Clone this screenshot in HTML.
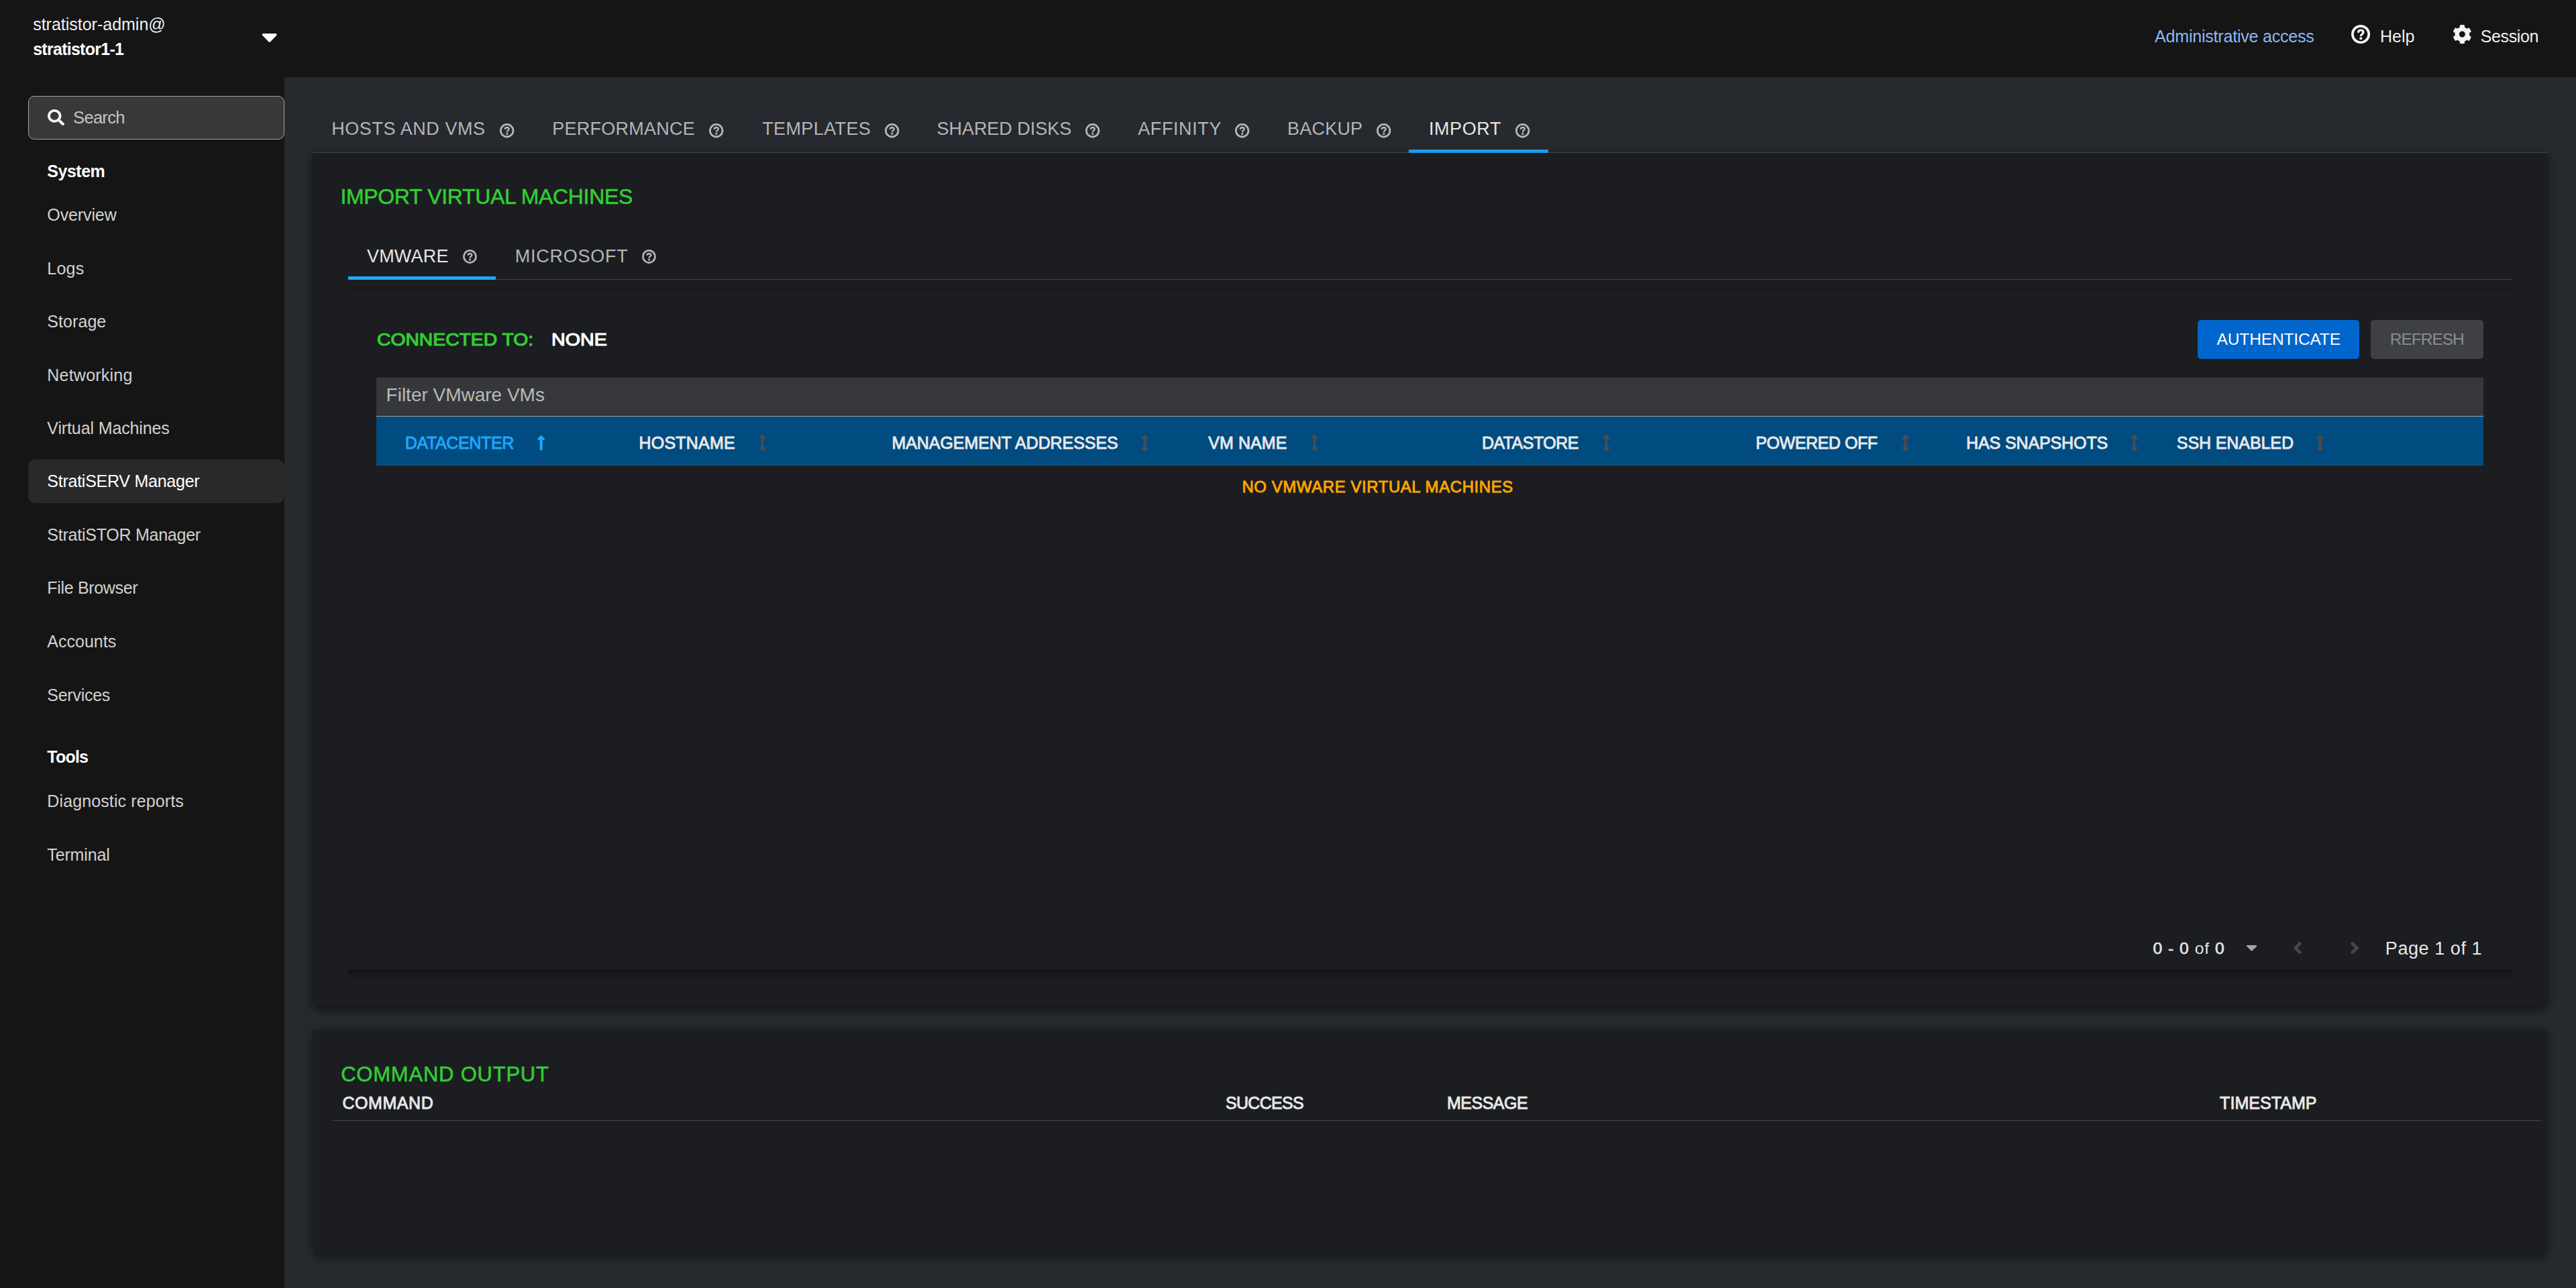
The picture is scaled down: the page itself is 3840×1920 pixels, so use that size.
<!DOCTYPE html>
<html lang="en">
<head>
<meta charset="utf-8">
<title>StratiSERV Manager - stratistor1-1</title>
<style>
html,body{margin:0;padding:0}
body{width:3840px;height:1920px;overflow:hidden;position:relative;background:#151515;
 font-family:"Liberation Sans",sans-serif;color:#fff;white-space:nowrap}
ul{list-style:none;margin:0;padding:0}
h1,h2,h3,p{margin:0;font-weight:400}
a{text-decoration:none}
b{font-weight:400;-webkit-text-stroke:.7px currentColor}
.t{position:absolute;display:block;white-space:nowrap}
.ic{position:absolute;display:block;overflow:visible}
.box{position:absolute;box-sizing:border-box}
#topbar{left:0;top:0;width:3840px;height:115px;background:#151515}
#sidebar{left:0;top:115px;width:424px;height:1805px;background:#151515}
#content{left:424px;top:115px;width:3416px;height:1805px;background:#26292d}
#searchbox{left:42px;top:143px;width:382px;height:65px;background:#383838;border:1px solid #a2a2a2;border-radius:9px}
#navsel{left:42px;top:685px;width:382px;height:64.5px;background:#292929;border-radius:10px}
.card{background:#1b1d21;border-radius:0 0 10px 10px}
#card1{box-shadow:0 5px 14px rgba(0,0,0,.55)}
#card2{box-shadow:0 1px 14px rgba(0,0,0,.4)}
#card1{left:466px;top:228px;width:3331px;height:1271.5px}
#card2{left:466px;top:1536px;width:3331px;height:337.5px}
#tabline{left:466px;top:227px;width:3331px;height:1px;background:#44474b}
#tabsel{left:2100px;top:223px;width:208px;height:5px;background:linear-gradient(#1fa7f8,#1e9ce9 50%,#1c90da)}
#panelshadow{left:519px;top:1445px;width:3225px;height:21px;background:linear-gradient(#111215,#15171a 30%,#191b1e 65%,#1b1d21)}
#subline{left:519px;top:416px;width:3225px;height:1px;background:#44474b}
#subshadow{left:519px;top:427px;width:3225px;height:7px;background:linear-gradient(#1b1d21,#1a1b1f 50%,#17181b)}
#subsel{left:519px;top:412px;width:220px;height:5px;background:#1fa7f8}
#btn-auth{left:3276px;top:477px;width:241px;height:58px;background:#0066cc;border-radius:5px}
#btn-refresh{left:3534px;top:477px;width:168px;height:58px;background:#3e4043;border-radius:5px}
#filter{left:561.2px;top:563.1px;width:3140.5px;height:57.6px;background:#36373a;border-bottom:1.3px solid #9a9c9e}
#thead{left:561.2px;top:620.7px;width:3140.5px;height:73.1px;background:#004b80;border-bottom:1.5px solid #46474b}
#cmdline{left:496px;top:1669.6px;width:3292px;height:1.5px;background:#46494d}
</style>
</head>
<body>
<header>
<div id="topbar" class="box"></div>
<div id="hostswitch">
<span class="t" style="left:49.2px;top:20.5px;font-size:25px;line-height:30px;color:#f0f0f0;letter-spacing:-0.01px;">stratistor-admin@</span>
<span class="t" style="left:49.2px;top:57.5px;font-size:25px;line-height:30px;color:#ffffff;font-weight:700;letter-spacing:-0.73px;">stratistor1-1</span>
<svg class="ic" style="left:391.3px;top:50.3px" width="21.6" height="13.1" viewBox="13 192 294 169" preserveAspectRatio="none"><path fill="#ffffff" d="M31.3 192h257.3c17.8 0 26.7 21.5 14.1 34.1L174.1 354.8c-7.8 7.8-20.5 7.8-28.3 0L17.2 226.1C4.6 213.5 13.5 192 31.3 192z"/></svg>
</div>
<div id="toolbar">
<a class="t" style="left:3212.1px;top:38.5px;font-size:25px;line-height:30px;color:#8bb9f4;letter-spacing:-0.2px;">Administrative access</a>
<svg class="ic" style="left:3505px;top:37.1px" width="28.1" height="28.1" viewBox="0 0 100 100"><circle cx="50" cy="50" r="43.4" fill="none" stroke="#f5f5f5" stroke-width="13.2"/><path d="M37 41.5C37 32.5 43.5 28.5 50.5 28.5C58.5 28.5 64 33 64 39.5C64 49 50.8 48.5 50.8 60.5" fill="none" stroke="#f5f5f5" stroke-width="11.5"/><rect x="44.2" y="66" width="13.2" height="12.4" rx="1.5" fill="#f5f5f5"/></svg>
<span class="t" style="left:3548.0px;top:38.5px;font-size:25px;line-height:30px;color:#f0f0f0;">Help</span>
<svg class="ic" style="left:3656.7px;top:37.2px" width="26.7" height="28.2" viewBox="19 8 474 496" preserveAspectRatio="none"><path fill="#f5f5f5" d="M487.4 315.7l-42.6-24.6c4.3-23.2 4.3-47 0-70.2l42.6-24.6c4.9-2.8 7.1-8.6 5.5-14-11.1-35.6-30-67.8-54.7-94.6-3.8-4.1-10-5.1-14.8-2.3L380.8 110c-17.9-15.4-38.5-27.3-60.8-35.1V25.8c0-5.6-3.9-10.5-9.4-11.7-36.7-8.2-74.3-7.8-109.2 0-5.5 1.2-9.4 6.1-9.4 11.7V75c-22.2 7.9-42.8 19.8-60.8 35.1L88.7 85.5c-4.9-2.8-11-1.9-14.8 2.3-24.7 26.7-43.6 58.9-54.7 94.6-1.7 5.4.6 11.2 5.5 14L67.3 221c-4.3 23.2-4.3 47 0 70.2l-42.6 24.6c-4.9 2.8-7.1 8.6-5.5 14 11.1 35.6 30 67.8 54.7 94.6 3.8 4.1 10 5.1 14.8 2.3l42.6-24.6c17.9 15.4 38.5 27.3 60.8 35.1v49.2c0 5.6 3.9 10.5 9.4 11.7 36.7 8.2 74.3 7.8 109.2 0 5.5-1.2 9.4-6.1 9.4-11.7v-49.2c22.2-7.9 42.8-19.8 60.8-35.1l42.6 24.6c4.9 2.8 11 1.9 14.8-2.3 24.7-26.7 43.6-58.9 54.7-94.6 1.5-5.5-.7-11.3-5.6-14.1zM256 336c-44.1 0-80-35.9-80-80s35.9-80 80-80 80 35.9 80 80-35.9 80-80 80z"/></svg>
<span class="t" style="left:3697.7px;top:38.5px;font-size:25px;line-height:30px;color:#f0f0f0;letter-spacing:-0.35px;">Session</span>
</div>
</header>
<nav id="nav">
<div id="sidebar" class="box"></div>
<div id="searchbox" class="box"></div>
<svg class="ic" style="left:70.7px;top:162.9px" width="25.2" height="24.2" viewBox="0 0 512 512" preserveAspectRatio="none"><path fill="#f5f5f5" d="M505 442.7L405.3 343c-4.5-4.5-10.6-7-17-7H372c27.6-35.3 44-79.7 44-128C416 93.1 322.9 0 208 0S0 93.1 0 208s93.1 208 208 208c48.3 0 92.7-16.4 128-44v16.3c0 6.4 2.5 12.5 7 17l99.7 99.7c9.4 9.4 24.6 9.4 33.9 0l28.3-28.3c9.4-9.4 9.4-24.6.1-34zM208 336c-70.7 0-128-57.2-128-128 0-70.7 57.2-128 128-128 70.7 0 128 57.2 128 128 0 70.7-57.2 128-128 128z"/></svg>
<span class="t" style="left:109.1px;top:159.5px;font-size:25.5px;line-height:31px;color:#c4c4c4;letter-spacing:-0.7px;">Search</span>
<div id="navsel" class="box"></div>
<h2 class="t" style="left:70.3px;top:240.2px;font-size:25px;line-height:30px;color:#ffffff;font-weight:700;letter-spacing:-0.48px;">System</h2>
<ul>
<li><a class="t" style="left:70.3px;top:305.4px;font-size:25px;line-height:30px;color:#d2d2d2;letter-spacing:-0.11px;">Overview</a></li>
<li><a class="t" style="left:70.3px;top:384.8px;font-size:25px;line-height:30px;color:#d2d2d2;letter-spacing:0.23px;">Logs</a></li>
<li><a class="t" style="left:70.3px;top:464.3px;font-size:25px;line-height:30px;color:#d2d2d2;letter-spacing:0.07px;">Storage</a></li>
<li><a class="t" style="left:70.3px;top:543.8px;font-size:25px;line-height:30px;color:#d2d2d2;letter-spacing:0.22px;">Networking</a></li>
<li><a class="t" style="left:70.3px;top:623.2px;font-size:25px;line-height:30px;color:#d2d2d2;letter-spacing:-0.12px;">Virtual Machines</a></li>
<li><a class="t" style="left:70.3px;top:702.1px;font-size:25px;line-height:30px;color:#ffffff;letter-spacing:-0.25px;">StratiSERV Manager</a></li>
<li><a class="t" style="left:70.3px;top:781.6px;font-size:25px;line-height:30px;color:#d2d2d2;letter-spacing:-0.24px;">StratiSTOR Manager</a></li>
<li><a class="t" style="left:70.3px;top:861.0px;font-size:25px;line-height:30px;color:#d2d2d2;letter-spacing:-0.33px;">File Browser</a></li>
<li><a class="t" style="left:70.3px;top:940.8px;font-size:25px;line-height:30px;color:#d2d2d2;">Accounts</a></li>
<li><a class="t" style="left:70.3px;top:1020.5px;font-size:25px;line-height:30px;color:#d2d2d2;letter-spacing:-0.26px;">Services</a></li>
</ul>
<h2 class="t" style="left:70.3px;top:1113.4px;font-size:25px;line-height:30px;color:#ffffff;font-weight:700;letter-spacing:-0.78px;">Tools</h2>
<ul>
<li><a class="t" style="left:70.3px;top:1178.5px;font-size:25px;line-height:30px;color:#d2d2d2;letter-spacing:0.12px;">Diagnostic reports</a></li>
<li><a class="t" style="left:70.3px;top:1258.6px;font-size:25px;line-height:30px;color:#d2d2d2;letter-spacing:-0.14px;">Terminal</a></li>
</ul>
</nav>
<main>
<div id="content" class="box"></div>
<ul id="tabs" role="tablist">
<li><a class="t" style="left:494.2px;top:175.8px;font-size:27px;line-height:32px;color:#b4b5b7;letter-spacing:0.57px;">HOSTS AND VMS</a><svg class="ic" style="left:744.8px;top:183.7px" width="21.4" height="21.4" viewBox="0 0 100 100"><circle cx="50" cy="50" r="43.4" fill="none" stroke="#b4b5b7" stroke-width="13.2"/><path d="M37 41.5C37 32.5 43.5 28.5 50.5 28.5C58.5 28.5 64 33 64 39.5C64 49 50.8 48.5 50.8 60.5" fill="none" stroke="#b4b5b7" stroke-width="11.5"/><rect x="44.2" y="66" width="13.2" height="12.4" rx="1.5" fill="#b4b5b7"/></svg></li>
<li><a class="t" style="left:823.3px;top:175.8px;font-size:27px;line-height:32px;color:#b4b5b7;letter-spacing:0.24px;">PERFORMANCE</a><svg class="ic" style="left:1056.9px;top:183.7px" width="21.4" height="21.4" viewBox="0 0 100 100"><circle cx="50" cy="50" r="43.4" fill="none" stroke="#b4b5b7" stroke-width="13.2"/><path d="M37 41.5C37 32.5 43.5 28.5 50.5 28.5C58.5 28.5 64 33 64 39.5C64 49 50.8 48.5 50.8 60.5" fill="none" stroke="#b4b5b7" stroke-width="11.5"/><rect x="44.2" y="66" width="13.2" height="12.4" rx="1.5" fill="#b4b5b7"/></svg></li>
<li><a class="t" style="left:1136.2px;top:175.8px;font-size:27px;line-height:32px;color:#b4b5b7;letter-spacing:0.39px;">TEMPLATES</a><svg class="ic" style="left:1318.9px;top:183.7px" width="21.4" height="21.4" viewBox="0 0 100 100"><circle cx="50" cy="50" r="43.4" fill="none" stroke="#b4b5b7" stroke-width="13.2"/><path d="M37 41.5C37 32.5 43.5 28.5 50.5 28.5C58.5 28.5 64 33 64 39.5C64 49 50.8 48.5 50.8 60.5" fill="none" stroke="#b4b5b7" stroke-width="11.5"/><rect x="44.2" y="66" width="13.2" height="12.4" rx="1.5" fill="#b4b5b7"/></svg></li>
<li><a class="t" style="left:1396.4px;top:175.8px;font-size:27px;line-height:32px;color:#b4b5b7;letter-spacing:-0.01px;">SHARED DISKS</a><svg class="ic" style="left:1618.1px;top:183.7px" width="21.4" height="21.4" viewBox="0 0 100 100"><circle cx="50" cy="50" r="43.4" fill="none" stroke="#b4b5b7" stroke-width="13.2"/><path d="M37 41.5C37 32.5 43.5 28.5 50.5 28.5C58.5 28.5 64 33 64 39.5C64 49 50.8 48.5 50.8 60.5" fill="none" stroke="#b4b5b7" stroke-width="11.5"/><rect x="44.2" y="66" width="13.2" height="12.4" rx="1.5" fill="#b4b5b7"/></svg></li>
<li><a class="t" style="left:1696.2px;top:175.8px;font-size:27px;line-height:32px;color:#b4b5b7;letter-spacing:0.61px;">AFFINITY</a><svg class="ic" style="left:1841.0px;top:183.7px" width="21.4" height="21.4" viewBox="0 0 100 100"><circle cx="50" cy="50" r="43.4" fill="none" stroke="#b4b5b7" stroke-width="13.2"/><path d="M37 41.5C37 32.5 43.5 28.5 50.5 28.5C58.5 28.5 64 33 64 39.5C64 49 50.8 48.5 50.8 60.5" fill="none" stroke="#b4b5b7" stroke-width="11.5"/><rect x="44.2" y="66" width="13.2" height="12.4" rx="1.5" fill="#b4b5b7"/></svg></li>
<li><a class="t" style="left:1919.0px;top:175.8px;font-size:27px;line-height:32px;color:#b4b5b7;letter-spacing:0.22px;">BACKUP</a><svg class="ic" style="left:2052.0px;top:183.7px" width="21.4" height="21.4" viewBox="0 0 100 100"><circle cx="50" cy="50" r="43.4" fill="none" stroke="#b4b5b7" stroke-width="13.2"/><path d="M37 41.5C37 32.5 43.5 28.5 50.5 28.5C58.5 28.5 64 33 64 39.5C64 49 50.8 48.5 50.8 60.5" fill="none" stroke="#b4b5b7" stroke-width="11.5"/><rect x="44.2" y="66" width="13.2" height="12.4" rx="1.5" fill="#b4b5b7"/></svg></li>
<li><a class="t" style="left:2129.9px;top:175.8px;font-size:27px;line-height:32px;color:#e6e6e6;letter-spacing:0.6px;">IMPORT</a><svg class="ic" style="left:2259.0px;top:183.7px" width="21.4" height="21.4" viewBox="0 0 100 100"><circle cx="50" cy="50" r="43.4" fill="none" stroke="#b4b5b7" stroke-width="13.2"/><path d="M37 41.5C37 32.5 43.5 28.5 50.5 28.5C58.5 28.5 64 33 64 39.5C64 49 50.8 48.5 50.8 60.5" fill="none" stroke="#b4b5b7" stroke-width="11.5"/><rect x="44.2" y="66" width="13.2" height="12.4" rx="1.5" fill="#b4b5b7"/></svg></li>
</ul>
<section>
<div id="card1" class="box card"></div>
<div id="tabline" class="box"></div>
<div id="tabsel" class="box"></div>
<h1 class="t" style="left:507.4px;top:274.0px;font-size:32px;line-height:38px;color:#32cd32;letter-spacing:-0.34px;-webkit-text-stroke:0.6px #32cd32;">IMPORT VIRTUAL MACHINES</h1>
<div id="panelshadow" class="box"></div>
<div id="subshadow" class="box"></div>
<div id="subline" class="box"></div>
<div id="subsel" class="box"></div>
<ul role="tablist">
<li><a class="t" style="left:547.0px;top:365.7px;font-size:27px;line-height:32px;color:#e6e6e6;letter-spacing:0.18px;">VMWARE</a><svg class="ic" style="left:690.2px;top:371.9px" width="20.9" height="20.9" viewBox="0 0 100 100"><circle cx="50" cy="50" r="43.4" fill="none" stroke="#b4b5b7" stroke-width="13.2"/><path d="M37 41.5C37 32.5 43.5 28.5 50.5 28.5C58.5 28.5 64 33 64 39.5C64 49 50.8 48.5 50.8 60.5" fill="none" stroke="#b4b5b7" stroke-width="11.5"/><rect x="44.2" y="66" width="13.2" height="12.4" rx="1.5" fill="#b4b5b7"/></svg></li>
<li><a class="t" style="left:767.7px;top:365.7px;font-size:27px;line-height:32px;color:#b4b5b7;letter-spacing:0.75px;">MICROSOFT</a><svg class="ic" style="left:956.8px;top:371.9px" width="20.9" height="20.9" viewBox="0 0 100 100"><circle cx="50" cy="50" r="43.4" fill="none" stroke="#b4b5b7" stroke-width="13.2"/><path d="M37 41.5C37 32.5 43.5 28.5 50.5 28.5C58.5 28.5 64 33 64 39.5C64 49 50.8 48.5 50.8 60.5" fill="none" stroke="#b4b5b7" stroke-width="11.5"/><rect x="44.2" y="66" width="13.2" height="12.4" rx="1.5" fill="#b4b5b7"/></svg></li>
</ul>
<span class="t" style="left:562.0px;top:491.3px;font-size:26px;line-height:31px;color:#32cd32;-webkit-text-stroke:1.2px #32cd32;transform:scaleX(1.0877);transform-origin:0 0;">CONNECTED TO:</span>
<span class="t" style="left:822.2px;top:491.3px;font-size:26px;line-height:31px;color:#ffffff;-webkit-text-stroke:1.2px #ffffff;transform:scaleX(1.1014);transform-origin:0 0;">NONE</span>
<div id="btn-auth" class="box"></div>
<div id="btn-refresh" class="box"></div>
<button class="t" style="background:none;border:0;padding:0;margin:0;font-family:inherit;left:3304.6px;top:490.9px;font-size:24.5px;line-height:29px;color:#ffffff;letter-spacing:-0.15px;">AUTHENTICATE</button>
<button class="t" style="background:none;border:0;padding:0;margin:0;font-family:inherit;left:3562.8px;top:490.9px;font-size:24.5px;line-height:29px;color:#8a8d90;letter-spacing:-1.02px;">REFRESH</button>
<div id="filter" class="box"></div>
<span class="t" style="left:575.6px;top:572.3px;font-size:28px;line-height:34px;color:#b9babb;letter-spacing:-0.01px;">Filter VMware VMs</span>
<div role="table">
<div id="thead" class="box"></div>
<div role="row">
<div role="columnheader"><span class="t" style="left:603.8px;top:645.3px;font-size:25px;line-height:30px;color:#1fa7f8;letter-spacing:-0.36px;-webkit-text-stroke:0.9px #1fa7f8;">DATACENTER</span><svg class="ic" style="left:800.7px;top:648.9px" width="11.4" height="22.3" viewBox="14 32 228 448" preserveAspectRatio="none"><path fill="#1fa7f8" d="M88 166.059V468c0 6.627 5.373 12 12 12h56c6.627 0 12-5.373 12-12V166.059h46.059c21.382 0 32.09-25.851 16.971-40.971l-86.059-86.059c-9.373-9.373-24.569-9.373-33.941 0l-86.059 86.059c-15.119 15.119-4.411 40.971 16.971 40.971H88z"/></svg></div>
<div role="columnheader"><span class="t" style="left:952.6px;top:645.3px;font-size:25px;line-height:30px;color:#e8e8e8;letter-spacing:0.2px;-webkit-text-stroke:0.9px #e8e8e8;">HOSTNAME</span><svg class="ic" style="left:1130.9px;top:647.9px" width="11" height="24.7" viewBox="18 0 220 512" preserveAspectRatio="none"><path fill="#4a4b4f" d="M214.059 377.941H168V134.059h46.059c21.382 0 32.09-25.851 16.971-40.971L144.971 7.029c-9.373-9.373-24.568-9.373-33.941 0L24.971 93.088c-15.119 15.119-4.411 40.971 16.971 40.971H88v243.882H41.941c-21.382 0-32.09 25.851-16.971 40.971l86.059 86.059c9.373 9.373 24.568 9.373 33.941 0l86.059-86.059c15.12-15.119 4.412-40.971-16.97-40.971z"/></svg></div>
<div role="columnheader"><span class="t" style="left:1329.4px;top:645.3px;font-size:25px;line-height:30px;color:#e8e8e8;letter-spacing:-0.06px;-webkit-text-stroke:0.9px #e8e8e8;">MANAGEMENT ADDRESSES</span><svg class="ic" style="left:1701.2px;top:647.9px" width="11" height="24.7" viewBox="18 0 220 512" preserveAspectRatio="none"><path fill="#4a4b4f" d="M214.059 377.941H168V134.059h46.059c21.382 0 32.09-25.851 16.971-40.971L144.971 7.029c-9.373-9.373-24.568-9.373-33.941 0L24.971 93.088c-15.119 15.119-4.411 40.971 16.971 40.971H88v243.882H41.941c-21.382 0-32.09 25.851-16.971 40.971l86.059 86.059c9.373 9.373 24.568 9.373 33.941 0l86.059-86.059c15.12-15.119 4.412-40.971-16.97-40.971z"/></svg></div>
<div role="columnheader"><span class="t" style="left:1801.3px;top:645.3px;font-size:25px;line-height:30px;color:#e8e8e8;letter-spacing:0.08px;-webkit-text-stroke:0.9px #e8e8e8;">VM NAME</span><svg class="ic" style="left:1953.5px;top:647.9px" width="11" height="24.7" viewBox="18 0 220 512" preserveAspectRatio="none"><path fill="#4a4b4f" d="M214.059 377.941H168V134.059h46.059c21.382 0 32.09-25.851 16.971-40.971L144.971 7.029c-9.373-9.373-24.568-9.373-33.941 0L24.971 93.088c-15.119 15.119-4.411 40.971 16.971 40.971H88v243.882H41.941c-21.382 0-32.09 25.851-16.971 40.971l86.059 86.059c9.373 9.373 24.568 9.373 33.941 0l86.059-86.059c15.12-15.119 4.412-40.971-16.97-40.971z"/></svg></div>
<div role="columnheader"><span class="t" style="left:2208.9px;top:645.3px;font-size:25px;line-height:30px;color:#e8e8e8;letter-spacing:-0.52px;-webkit-text-stroke:0.9px #e8e8e8;">DATASTORE</span><svg class="ic" style="left:2388.5px;top:647.9px" width="11" height="24.7" viewBox="18 0 220 512" preserveAspectRatio="none"><path fill="#4a4b4f" d="M214.059 377.941H168V134.059h46.059c21.382 0 32.09-25.851 16.971-40.971L144.971 7.029c-9.373-9.373-24.568-9.373-33.941 0L24.971 93.088c-15.119 15.119-4.411 40.971 16.971 40.971H88v243.882H41.941c-21.382 0-32.09 25.851-16.971 40.971l86.059 86.059c9.373 9.373 24.568 9.373 33.941 0l86.059-86.059c15.12-15.119 4.412-40.971-16.97-40.971z"/></svg></div>
<div role="columnheader"><span class="t" style="left:2617.3px;top:645.3px;font-size:25px;line-height:30px;color:#e8e8e8;letter-spacing:-0.44px;-webkit-text-stroke:0.9px #e8e8e8;">POWERED OFF</span><svg class="ic" style="left:2834.5px;top:647.9px" width="11" height="24.7" viewBox="18 0 220 512" preserveAspectRatio="none"><path fill="#4a4b4f" d="M214.059 377.941H168V134.059h46.059c21.382 0 32.09-25.851 16.971-40.971L144.971 7.029c-9.373-9.373-24.568-9.373-33.941 0L24.971 93.088c-15.119 15.119-4.411 40.971 16.971 40.971H88v243.882H41.941c-21.382 0-32.09 25.851-16.971 40.971l86.059 86.059c9.373 9.373 24.568 9.373 33.941 0l86.059-86.059c15.12-15.119 4.412-40.971-16.97-40.971z"/></svg></div>
<div role="columnheader"><span class="t" style="left:2931.1px;top:645.3px;font-size:25px;line-height:30px;color:#e8e8e8;letter-spacing:-0.12px;-webkit-text-stroke:0.9px #e8e8e8;">HAS SNAPSHOTS</span><svg class="ic" style="left:3176.3px;top:647.9px" width="11" height="24.7" viewBox="18 0 220 512" preserveAspectRatio="none"><path fill="#4a4b4f" d="M214.059 377.941H168V134.059h46.059c21.382 0 32.09-25.851 16.971-40.971L144.971 7.029c-9.373-9.373-24.568-9.373-33.941 0L24.971 93.088c-15.119 15.119-4.411 40.971 16.971 40.971H88v243.882H41.941c-21.382 0-32.09 25.851-16.971 40.971l86.059 86.059c9.373 9.373 24.568 9.373 33.941 0l86.059-86.059c15.12-15.119 4.412-40.971-16.97-40.971z"/></svg></div>
<div role="columnheader"><span class="t" style="left:3244.8px;top:645.3px;font-size:25px;line-height:30px;color:#e8e8e8;letter-spacing:-0.09px;-webkit-text-stroke:0.9px #e8e8e8;">SSH ENABLED</span><svg class="ic" style="left:3453.2px;top:647.9px" width="11" height="24.7" viewBox="18 0 220 512" preserveAspectRatio="none"><path fill="#4a4b4f" d="M214.059 377.941H168V134.059h46.059c21.382 0 32.09-25.851 16.971-40.971L144.971 7.029c-9.373-9.373-24.568-9.373-33.941 0L24.971 93.088c-15.119 15.119-4.411 40.971 16.971 40.971H88v243.882H41.941c-21.382 0-32.09 25.851-16.971 40.971l86.059 86.059c9.373 9.373 24.568 9.373 33.941 0l86.059-86.059c15.12-15.119 4.412-40.971-16.97-40.971z"/></svg></div>
</div>
<p class="t" style="left:1851.4px;top:710.7px;font-size:24px;line-height:29px;color:#ffa500;letter-spacing:0.56px;-webkit-text-stroke:0.9px #ffa500;">NO VMWARE VIRTUAL MACHINES</p>
</div>
<div id="pagination">
<span class="t" style="left:3209.4px;top:1398.7px;font-size:24.5px;line-height:29px;color:#e4e4e4;letter-spacing:1.07px;"><b>0 - 0</b> of <b>0</b></span>
<svg class="ic" style="left:3348.8px;top:1409.1px" width="15.2" height="8.6" viewBox="13 192 294 169" preserveAspectRatio="none"><path fill="#a4a5a7" d="M31.3 192h257.3c17.8 0 26.7 21.5 14.1 34.1L174.1 354.8c-7.8 7.8-20.5 7.8-28.3 0L17.2 226.1C4.6 213.5 13.5 192 31.3 192z"/></svg>
<svg class="ic" style="left:3419.3px;top:1404.0px" width="11.8" height="18.1" viewBox="24 96 208 320" preserveAspectRatio="none"><path fill="#46474b" d="M31.7 239l136-136c9.4-9.4 24.6-9.4 33.9 0l22.6 22.6c9.4 9.4 9.4 24.6 0 33.9L127.9 256l96.4 96.4c9.4 9.4 9.4 24.6 0 33.9L201.7 409c-9.4 9.4-24.6 9.4-33.9 0l-136-136c-9.5-9.4-9.5-24.6-.1-34z"/></svg>
<svg class="ic" style="left:3504.0px;top:1404.0px" width="12.2" height="18.1" viewBox="24 96 208 320" preserveAspectRatio="none"><path fill="#46474b" d="M224.3 273l-136 136c-9.4 9.4-24.6 9.4-33.9 0l-22.6-22.6c-9.4-9.4-9.4-24.6 0-33.9l96.4-96.4-96.4-96.4c-9.4-9.4-9.4-24.6 0-33.9L54.3 103c9.4-9.4 24.6-9.4 33.9 0l136 136c9.5 9.4 9.5 24.6.1 34z"/></svg>
<span class="t" style="left:3555.8px;top:1397.9px;font-size:27px;line-height:32px;color:#e8e8e8;letter-spacing:0.57px;">Page 1 of 1</span>
</div>
</section>
<section>
<div id="card2" class="box card"></div>
<h2 class="t" style="left:508.2px;top:1582.7px;font-size:31px;line-height:37px;color:#32cd32;letter-spacing:0.78px;-webkit-text-stroke:0.6px #32cd32;">COMMAND OUTPUT</h2>
<div role="table">
<div role="row">
<span class="t" style="left:510.5px;top:1628.9px;font-size:25px;line-height:30px;color:#e8e8e8;letter-spacing:0.55px;-webkit-text-stroke:0.9px #e8e8e8;">COMMAND</span>
<span class="t" style="left:1827.1px;top:1628.9px;font-size:25px;line-height:30px;color:#e8e8e8;letter-spacing:-0.73px;-webkit-text-stroke:0.9px #e8e8e8;">SUCCESS</span>
<span class="t" style="left:2157.0px;top:1628.9px;font-size:25px;line-height:30px;color:#e8e8e8;letter-spacing:-0.5px;-webkit-text-stroke:0.9px #e8e8e8;">MESSAGE</span>
<span class="t" style="left:3309.1px;top:1628.9px;font-size:25px;line-height:30px;color:#e8e8e8;letter-spacing:0.05px;-webkit-text-stroke:0.9px #e8e8e8;">TIMESTAMP</span>
</div>
<div id="cmdline" class="box"></div>
</div>
</section>
</main>
</body>
</html>
